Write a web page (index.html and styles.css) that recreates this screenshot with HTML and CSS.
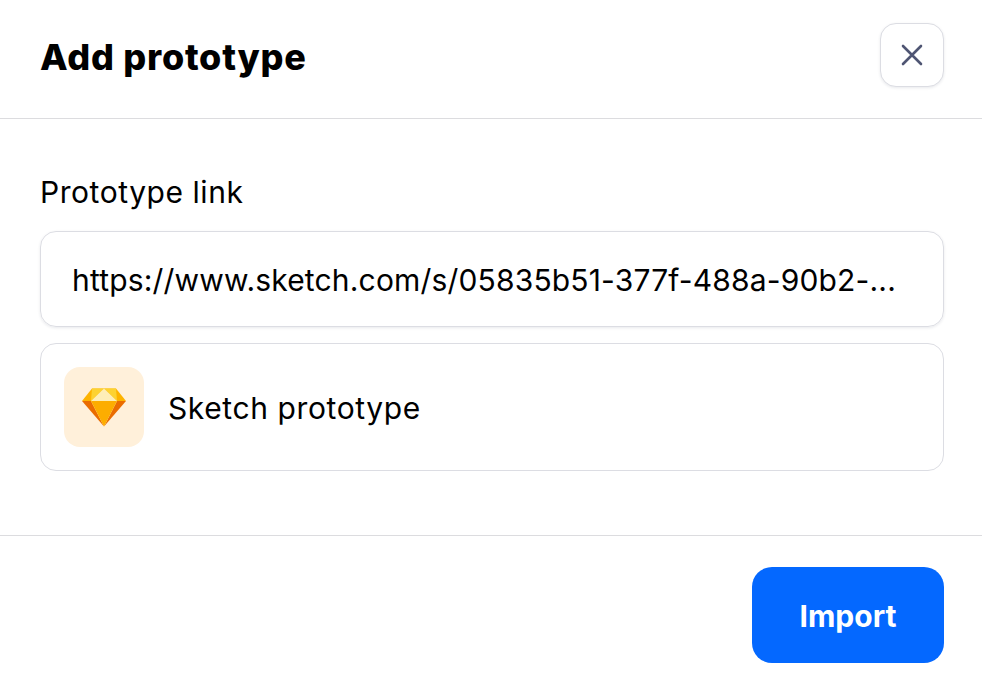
FILE: index.html
```html
<!DOCTYPE html>
<html lang="en">
<head>
<meta charset="utf-8">
<title>Add prototype</title>
<link rel="stylesheet" href="styles.css">
</head>
<body>
<div class="dialog">
  <header class="header">
    <h1 class="title">Add prototype</h1>
    <button class="close" type="button" aria-label="Close">
      <svg width="24" height="24" viewBox="0 0 24 24" fill="none"><path d="M3 3L21 21M21 3L3 21" stroke="#4f5573" stroke-width="2.6" stroke-linecap="round"/></svg>
    </button>
  </header>
  <main class="body">
    <label class="label">Prototype link</label>
    <div class="input"><span class="input-text">https://www.sketch.com/s/05835b51-377f-488a-90b2-...</span></div>
    <div class="card">
      <div class="tile">
        <svg width="44" height="40" viewBox="0 0 44 40">
          <polygon points="10,1.5 34,1.5 44,14 0,14" fill="#fdb300"/>
          <polygon points="0,14 22,39.5 9,14" fill="#ea6c00"/>
          <polygon points="44,14 22,39.5 35,14" fill="#ea6c00"/>
          <polygon points="9,14 35,14 22,39.5" fill="#fdad00"/>
          <polygon points="10,1.5 9,14 22,1.5" fill="#fdd231"/>
          <polygon points="34,1.5 35,14 22,1.5" fill="#fdd231"/>
          <polygon points="22,1.5 9,14 35,14" fill="#feeeb7"/>
        </svg>
      </div>
      <span class="card-name">Sketch prototype</span>
    </div>
  </main>
  <footer class="footer">
    <button class="import" type="button">Import</button>
  </footer>
</div>
</body>
</html>
```
FILE: styles.css
```css
* { box-sizing: border-box; }
html, body { margin: 0; padding: 0; background: #fff; }
body { font-family: Inter, "Liberation Sans", sans-serif; color: #000; }
.dialog { width: 982px; height: 690px; display: flex; flex-direction: column; }
.header {
  height: 119px; padding: 23px 38px 31px 40px;
  display: flex; justify-content: space-between; align-items: flex-start;
  border-bottom: 1px solid #dcdcdf;
}
.title { margin: 13px 0 0; font-size: 36px; line-height: 42px; font-weight: 800; letter-spacing: 0.75px; }
.close {
  width: 64px; height: 64px; padding: 0; background: #fff;
  border: 1px solid #dcdde3; border-radius: 16px;
  box-shadow: 0 1px 3px rgba(30,35,70,.1);
  display: flex; align-items: center; justify-content: center;
}
.body { height: 417px; padding: 53px 38px 0 40px; border-bottom: 1px solid #dcdcdf; }
.label { display: block; font-size: 30px; line-height: 40px; margin-bottom: 19px; letter-spacing: 0.55px; }
.input {
  height: 96px; padding: 2px 32px 0 31px; display: flex; align-items: center;
  border: 1px solid #dcdde3; border-radius: 16px;
  box-shadow: 0 1px 3px rgba(30,35,70,.1);
  font-size: 30px; letter-spacing: 0.17px;
}
.input-text { white-space: nowrap; }
.card {
  height: 128px; margin-top: 16px; padding: 0 23px; display: flex; align-items: center; gap: 24px;
  border: 1px solid #dcdde3; border-radius: 16px;
}
.tile {
  width: 80px; height: 80px; border-radius: 16px; background: #fff0da;
  display: flex; align-items: center; justify-content: center;
}
.card-name { font-size: 30px; letter-spacing: 0.6px; padding-top: 2px; }
.footer { padding: 31px 38px 0 0; display: flex; justify-content: flex-end; }
.import {
  width: 192px; height: 96px; padding: 2px 0 0; border: 0; border-radius: 20px; background: #0468ff; color: #fff;
  font: 700 30px Inter, "Liberation Sans", sans-serif;
}
```
